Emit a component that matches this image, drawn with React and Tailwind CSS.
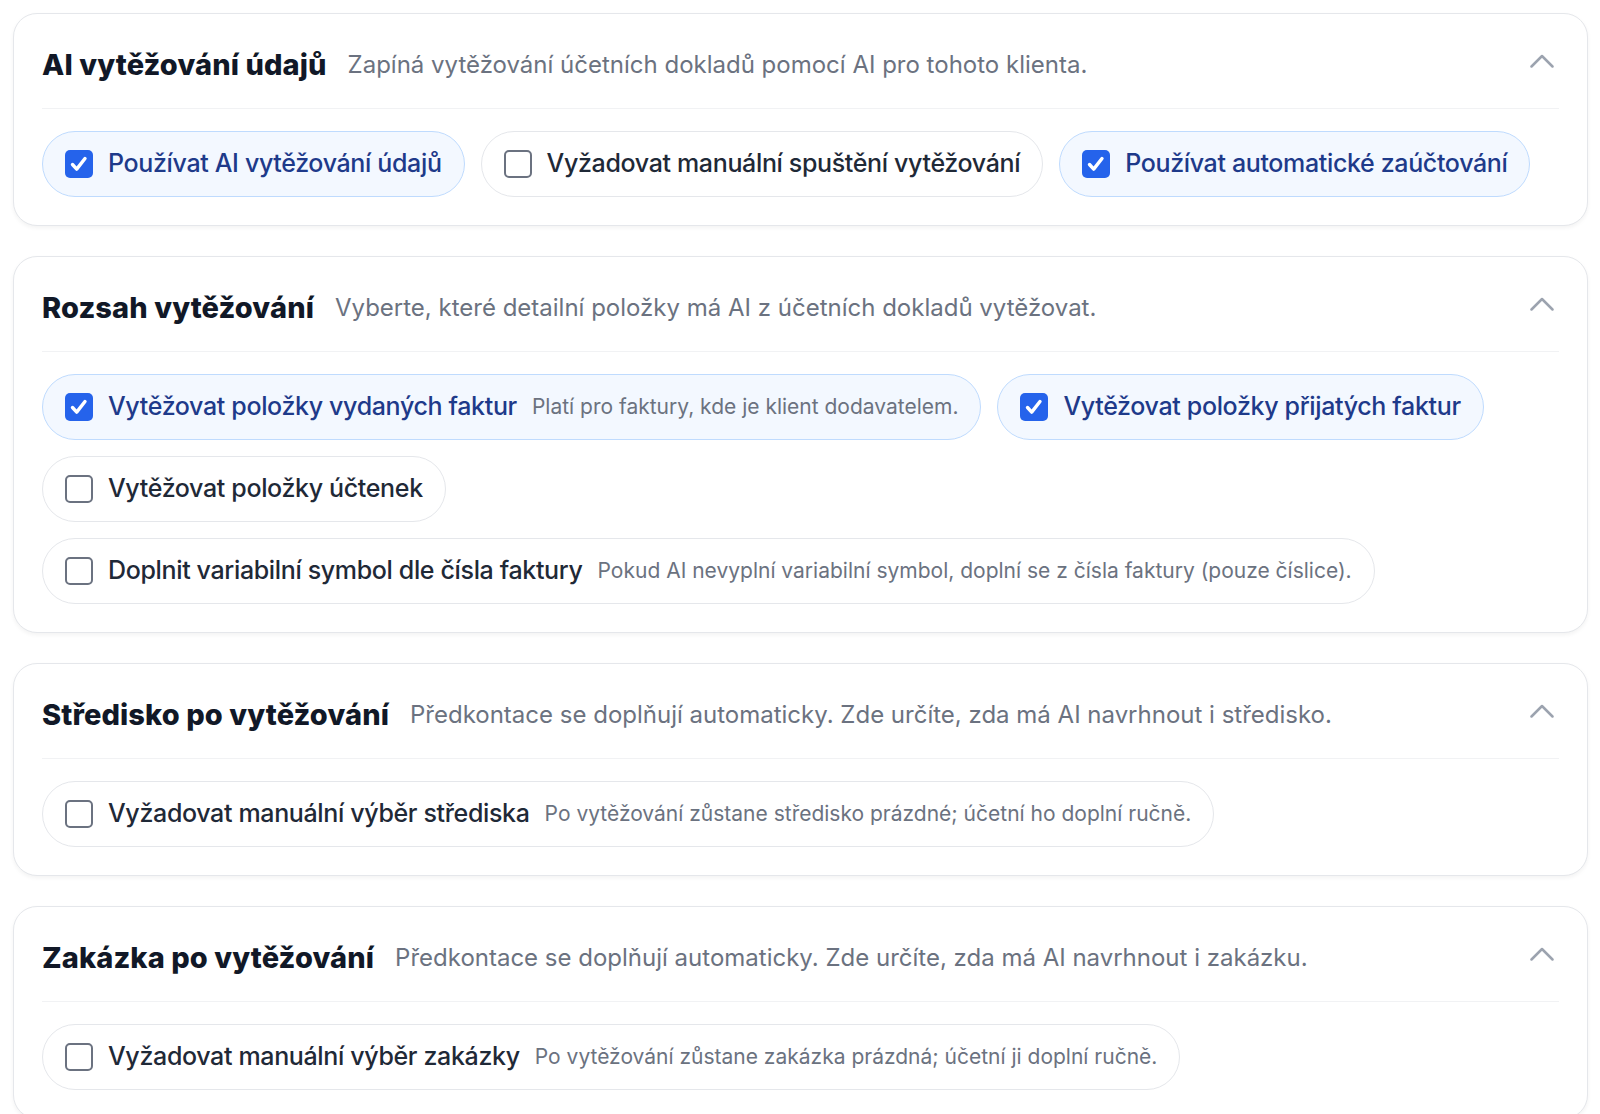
import React from "react";

function Check({ checked }) {
  if (checked) {
    return (
      <span className="flex h-[28px] w-[28px] shrink-0 items-center justify-center rounded-[5px] bg-[#2563eb]">
        <svg width="22" height="22" viewBox="0 0 22 22" fill="none">
          <path d="M4.5 11.5l4.2 4.6L17 5.5" stroke="white" strokeWidth="3.4" strokeLinecap="round" strokeLinejoin="round" />
        </svg>
      </span>
    );
  }
  return <span className="h-[28px] w-[28px] shrink-0 rounded-[5px] border-2 border-[#6b7280] bg-white" />;
}

function Pill({ checked, label, hint }) {
  return (
    <label
      className={
        checked
          ? "flex h-[66px] items-center gap-[15px] rounded-full border border-[#bfdbfe] bg-[#f3f8ff] px-[22px]"
          : "flex h-[66px] items-center gap-[15px] rounded-full border border-[#e5e7eb] bg-white px-[22px]"
      }
    >
      <Check checked={checked} />
      <span
        className={
          checked
            ? "text-[25px] font-medium tracking-[-0.35px] text-[#1e3a8a]"
            : "text-[25px] font-medium tracking-[-0.35px] text-[#1f2937]"
        }
      >
        {label}
      </span>
      {hint && <span className="text-[21px] text-[#6b7280]">{hint}</span>}
    </label>
  );
}

function Card({ title, desc, children }) {
  return (
    <section className="rounded-[24px] border border-[#e5e7eb] bg-white px-7 pb-7 pt-[29px] shadow-[0_2px_4px_rgba(0,0,0,0.05)]">
      <div className="flex h-[44px] items-center">
        <h2 className="text-[29px] font-extrabold tracking-[0.1px] text-[#111827]">{title}</h2>
        <p className="ml-[21px] text-[24px] text-[#6b7280]">{desc}</p>
        <button className="ml-auto mr-[5px] mb-[8px] flex items-center">
          <svg width="24" height="14" viewBox="0 0 24 14" fill="none">
            <path d="M1.5 12.5L12 2l10.5 10.5" stroke="#9ca3af" strokeWidth="2.5" strokeLinecap="round" strokeLinejoin="round" />
          </svg>
        </button>
      </div>
      <div className="mt-[21px] h-px bg-[#f1f2f4]" />
      <div className="mt-[22px] flex flex-wrap gap-4">{children}</div>
    </section>
  );
}

export default function App() {
  return (
    <div className="min-h-screen bg-white pl-[13px] pr-[12px] pt-[13px]" style={{ fontFamily: "Inter, 'Noto Sans', sans-serif" }}>
      <div className="flex flex-col gap-[30px]">
        <Card title="AI vytěžování údajů" desc="Zapíná vytěžování účetních dokladů pomocí AI pro tohoto klienta.">
          <Pill checked label="Používat AI vytěžování údajů" />
          <Pill label="Vyžadovat manuální spuštění vytěžování" />
          <Pill checked label="Používat automatické zaúčtování" />
        </Card>
        <Card title="Rozsah vytěžování" desc="Vyberte, které detailní položky má AI z účetních dokladů vytěžovat.">
          <Pill checked label="Vytěžovat položky vydaných faktur" hint="Platí pro faktury, kde je klient dodavatelem." />
          <Pill checked label="Vytěžovat položky přijatých faktur" />
          <Pill label="Vytěžovat položky účtenek" />
          <Pill
            label="Doplnit variabilní symbol dle čísla faktury"
            hint="Pokud AI nevyplní variabilní symbol, doplní se z čísla faktury (pouze číslice)."
          />
        </Card>
        <Card title="Středisko po vytěžování" desc="Předkontace se doplňují automaticky. Zde určíte, zda má AI navrhnout i středisko.">
          <Pill label="Vyžadovat manuální výběr střediska" hint="Po vytěžování zůstane středisko prázdné; účetní ho doplní ručně." />
        </Card>
        <Card title="Zakázka po vytěžování" desc="Předkontace se doplňují automaticky. Zde určíte, zda má AI navrhnout i zakázku.">
          <Pill label="Vyžadovat manuální výběr zakázky" hint="Po vytěžování zůstane zakázka prázdná; účetní ji doplní ručně." />
        </Card>
      </div>
    </div>
  );
}
